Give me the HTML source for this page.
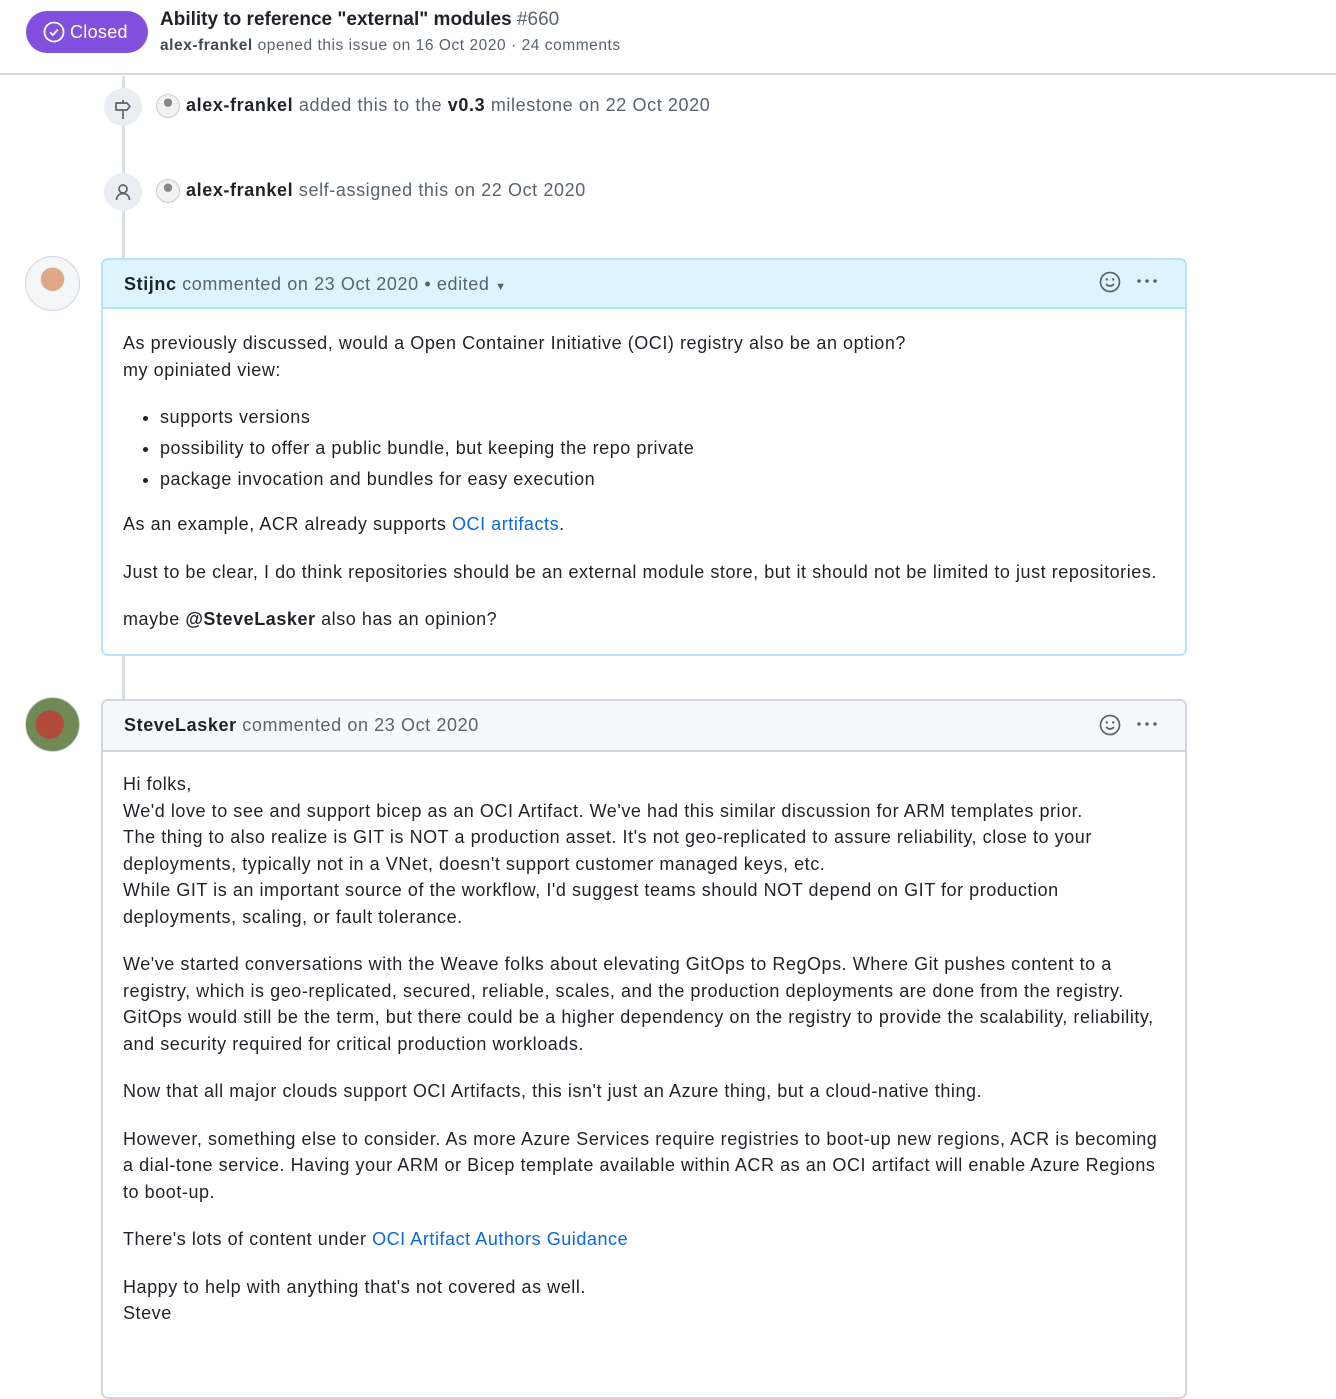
<!DOCTYPE html>
<html><head><meta charset="utf-8"><style>
*{box-sizing:border-box;margin:0;padding:0}
body{width:1336px;height:1334px;overflow:hidden;background:#fff;font-family:"Liberation Sans",sans-serif;color:#1f2328;position:relative}
.abs{position:absolute;white-space:nowrap}
.hdr{position:absolute;left:0;top:0;width:1336px;height:75px;border-bottom:2px solid #d0d7de}
.badge{position:absolute;left:26px;top:11px;width:122px;height:42px;border-radius:21px;background:#8250df;color:#fff;font-size:18px;line-height:42px;padding-left:44px;letter-spacing:0.3px}
.line{position:absolute;left:122px;width:3px;background:#d8dee4}
.ic{position:absolute;left:104px;width:38px;height:38px;border-radius:50%;background:#eaeef2}
.av{position:absolute;width:24px;height:24px;border-radius:50%;background:radial-gradient(circle at 50% 35%,#888 0 22%,#f2f2f2 24%);border:1px solid #ccc}
.ev{font-size:18px;color:#59636e;letter-spacing:0.6px}
.ev b{color:#1f2328}
.box{position:absolute;left:101px;width:1086px;border-radius:7px;overflow:hidden}
.bh{height:49px;font-size:18px;line-height:49px;padding-left:21px;color:#59636e;letter-spacing:0.6px}
.bh b{color:#1f2328}
.bb{padding:21px 20px;font-size:18px;line-height:26.5px;color:#1f2328;letter-spacing:0.55px;white-space:nowrap}
.bb p{margin-bottom:21px}
.bb ul{margin:0 0 16px 37px}
.bb li{line-height:31px;padding-left:0}
a{color:#0969da;text-decoration:none}
.big{position:absolute;left:25px;width:55px;height:55px;border-radius:50%;border:1px solid #d0d7de}
</style></head><body>
<div class="hdr"></div>
<div class="badge"><svg style="position:absolute;left:17px;top:10px" width="22" height="22" viewBox="0 0 22 22"><circle cx="11" cy="11" r="9.5" fill="none" stroke="#fff" stroke-width="1.8"/><path d="M7 11.3l2.8 2.8 5.2-5.6" fill="none" stroke="#fff" stroke-width="1.8"/></svg>Closed</div>
<div class="abs" style="left:160px;top:9px;font-size:19px;font-weight:bold;color:#1f2328">Ability to reference "external" modules <span style="font-weight:normal;color:#59636e">#660</span></div>
<div class="abs" style="left:160px;top:37px;font-size:15.5px;color:#59636e;letter-spacing:0.55px"><b style="color:#424a53">alex-frankel</b> opened this issue on 16 Oct 2020 · 24 comments</div>

<div class="line" style="top:76px;height:182px"></div>
<div class="line" style="top:655px;height:44px"></div>

<div class="ic" style="top:88px"><svg width="38" height="38" viewBox="0 0 38 38"><path d="M19 12v3M19 22v9M12 15h11l3 3.5-3 3.5H12z" fill="none" stroke="#59636e" stroke-width="1.7" stroke-linejoin="round"/></svg></div>
<div class="ic" style="top:173px"><svg width="38" height="38" viewBox="0 0 38 38"><circle cx="19" cy="16" r="4" fill="none" stroke="#59636e" stroke-width="1.7"/><path d="M12.5 27c0-4 3-6.5 6.5-6.5s6.5 2.5 6.5 6.5" fill="none" stroke="#59636e" stroke-width="1.7"/></svg></div>
<div class="av" style="left:156px;top:94px"></div>
<div class="av" style="left:156px;top:179px"></div>
<div class="abs ev" style="left:186px;top:95px"><b>alex-frankel</b> added this to the <b>v0.3</b> milestone on 22 Oct 2020</div>
<div class="abs ev" style="left:186px;top:180px"><b>alex-frankel</b> self-assigned this on 22 Oct 2020</div>

<div class="big" style="top:256px;background:radial-gradient(circle at 50% 42%,#e0a888 0 28%,#f4f6f8 30%)"></div>
<div class="box" style="top:258px;height:398px;border:2px solid #b6e3ff">
<div class="bh" style="background:#ddf4ff;border-bottom:2px solid #b6e3ff"><b>Stijnc</b> commented on 23 Oct 2020 • edited <span style="font-size:11px">▼</span></div>
<div class="bb">
<p style="margin-bottom:19px">As previously discussed, would a Open Container Initiative (OCI) registry also be an option?<br>my opiniated view:</p>
<ul><li>supports versions</li><li>possibility to offer a public bundle, but keeping the repo private</li><li>package invocation and bundles for easy execution</li></ul>
<p>As an example, ACR already supports <a>OCI artifacts</a>.</p>
<p>Just to be clear, I do think repositories should be an external module store, but it should not be limited to just repositories.</p>
<p>maybe <b>@SteveLasker</b> also has an opinion?</p>
</div></div>

<div class="big" style="top:697px;background:radial-gradient(circle at 45% 50%,#b04a3a 0 35%,#6f8a55 37%)"></div>
<div class="box" style="top:699px;height:700px;border:2px solid #d0d7de">
<div class="bh" style="background:#f6f8fa;border-bottom:2px solid #d0d7de;height:51px;line-height:49px"><b>SteveLasker</b> commented on 23 Oct 2020</div>
<div class="bb" style="padding-top:19px">
<p>Hi folks,<br>We'd love to see and support bicep as an OCI Artifact. We've had this similar discussion for ARM templates prior.<br>The thing to also realize is GIT is NOT a production asset. It's not geo-replicated to assure reliability, close to your<br>deployments, typically not in a VNet, doesn't support customer managed keys, etc.<br>While GIT is an important source of the workflow, I'd suggest teams should NOT depend on GIT for production<br>deployments, scaling, or fault tolerance.</p>
<p>We've started conversations with the Weave folks about elevating GitOps to RegOps. Where Git pushes content to a<br>registry, which is geo-replicated, secured, reliable, scales, and the production deployments are done from the registry.<br>GitOps would still be the term, but there could be a higher dependency on the registry to provide the scalability, reliability,<br>and security required for critical production workloads.</p>
<p>Now that all major clouds support OCI Artifacts, this isn't just an Azure thing, but a cloud-native thing.</p>
<p>However, something else to consider. As more Azure Services require registries to boot-up new regions, ACR is becoming<br>a dial-tone service. Having your ARM or Bicep template available within ACR as an OCI artifact will enable Azure Regions<br>to boot-up.</p>
<p>There's lots of content under <a>OCI Artifact Authors Guidance</a></p>
<p>Happy to help with anything that's not covered as well.<br>Steve</p>
</div></div>

<svg class="abs" style="left:1098px;top:270px" width="66" height="24" viewBox="0 0 66 24"><circle cx="12" cy="12" r="9.5" fill="none" stroke="#59636e" stroke-width="1.7"/><circle cx="8.8" cy="9.5" r="1.2" fill="#59636e"/><circle cx="15.2" cy="9.5" r="1.2" fill="#59636e"/><path d="M8 14q4 4 8 0" fill="none" stroke="#59636e" stroke-width="1.6"/><circle cx="41" cy="11" r="1.8" fill="#59636e"/><circle cx="49" cy="11" r="1.8" fill="#59636e"/><circle cx="57" cy="11" r="1.8" fill="#59636e"/></svg>
<svg class="abs" style="left:1098px;top:713px" width="66" height="24" viewBox="0 0 66 24"><circle cx="12" cy="12" r="9.5" fill="none" stroke="#59636e" stroke-width="1.7"/><circle cx="8.8" cy="9.5" r="1.2" fill="#59636e"/><circle cx="15.2" cy="9.5" r="1.2" fill="#59636e"/><path d="M8 14q4 4 8 0" fill="none" stroke="#59636e" stroke-width="1.6"/><circle cx="41" cy="11" r="1.8" fill="#59636e"/><circle cx="49" cy="11" r="1.8" fill="#59636e"/><circle cx="57" cy="11" r="1.8" fill="#59636e"/></svg>
</body></html>
